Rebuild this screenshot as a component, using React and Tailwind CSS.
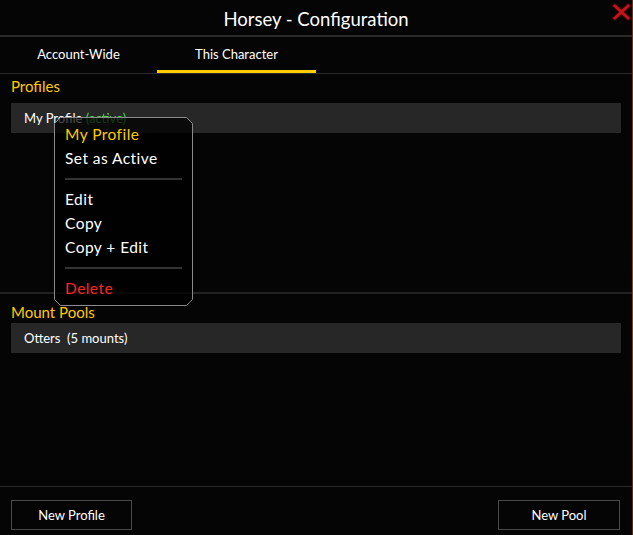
import React from "react";

function Menu() {
  return (
    <div className="absolute left-[54px] top-[117px] w-[139px] h-[189px]">
      <svg className="absolute inset-0" width="139" height="189" viewBox="0 0 139 189">
        <polygon
          points="6.5,0.5 132.5,0.5 138.5,6.5 138.5,182.5 132.5,188.5 6.5,188.5 0.5,182.5 0.5,6.5"
          fill="rgba(0,0,0,0.72)"
          stroke="#8a8a8a"
          strokeWidth="1"
        />
      </svg>
      <div className="relative flex flex-col pt-[5px] pl-[11px] pr-[11px] text-[15.5px] tracking-[0.45px]">
        <div className="h-[24px] leading-[24px] text-[#ffcc00]">My Profile</div>
        <div className="h-[24px] leading-[24px] text-white">Set as Active</div>
        <div className="h-[17px] flex items-center"><div className="h-[2px] w-full bg-[#333333]" /></div>
        <div className="h-[24px] leading-[24px] text-white">Edit</div>
        <div className="h-[24px] leading-[24px] text-white">Copy</div>
        <div className="h-[24px] leading-[24px] text-white">Copy + Edit</div>
        <div className="h-[17px] flex items-center"><div className="h-[2px] w-full bg-[#333333]" /></div>
        <div className="h-[24px] leading-[24px] text-[#ff2424]">Delete</div>
      </div>
    </div>
  );
}

export default function App() {
  return (
    <div
      className="relative flex w-[633px] h-[535px] bg-[#050505] overflow-hidden"
      style={{ fontFamily: "Lato, 'Open Sans', sans-serif" }}
    >
      <div className="flex flex-col flex-1 min-w-0">
        <div className="h-[37px] flex items-center justify-center pt-[5px] text-white text-[18.5px] border-b-2 border-[#2a2a2a]">
          Horsey - Configuration
        </div>
        <div className="h-[37px] flex border-b border-[#2a2a2a] text-white text-[13px]">
          <div className="w-[157px] flex items-center justify-center">Account-Wide</div>
          <div className="w-[159px] flex flex-col">
            <div className="flex-1 flex items-center justify-center pt-[3px]">This Character</div>
            <div className="h-[3px] bg-[#ffcc00]" />
          </div>
        </div>
        <div className="h-[220px] flex flex-col px-[11px] border-b-2 border-[#222222]">
          <div className="pt-[3px] h-[29px] leading-[18px] text-[15px] text-[#ffcc00]">Profiles</div>
          <div className="h-[30px] bg-[#272727] flex items-center px-[13px] pt-[1px] text-[13px] text-white">
            My Profile&nbsp;<span className="text-[#4cd04c]">(active)</span>
          </div>
        </div>
        <div className="flex-1 flex flex-col px-[11px] border-b border-[#2a2a2a]">
          <div className="pt-[8px] h-[29px] leading-[20px] text-[15px] text-[#ffcc00]">Mount Pools</div>
          <div className="h-[30px] bg-[#272727] flex items-center px-[13px] pt-[1px] text-[13px] text-white whitespace-pre">
            {"Otters  (5 mounts)"}
          </div>
        </div>
        <div className="h-[48px] flex items-start justify-between pl-[11px] pr-[12px] pt-[13px]">
          <button className="w-[121px] h-[30px] border border-[#4a4a4a] text-white text-[13px] pt-[1px] flex items-center justify-center">
            New Profile
          </button>
          <button className="w-[122px] h-[30px] border border-[#4a4a4a] text-white text-[13px] pt-[1px] flex items-center justify-center">
            New Pool
          </button>
        </div>
      </div>
      <div className="w-px bg-gradient-to-b from-[#6a3010] via-[#8a4a18] to-[#5a2a0a]" />
      <svg className="absolute right-[2px] top-[3px]" width="19" height="18" viewBox="0 0 19 18">
        <g strokeLinecap="square">
          <line x1="3" y1="3" x2="16" y2="15" stroke="#3a0000" strokeWidth="5" />
          <line x1="16" y1="3" x2="3" y2="15" stroke="#3a0000" strokeWidth="5" />
          <line x1="3" y1="3" x2="16" y2="15" stroke="#c4141a" strokeWidth="3" />
          <line x1="16" y1="3" x2="3" y2="15" stroke="#c4141a" strokeWidth="3" />
        </g>
      </svg>
      <Menu />
    </div>
  );
}
